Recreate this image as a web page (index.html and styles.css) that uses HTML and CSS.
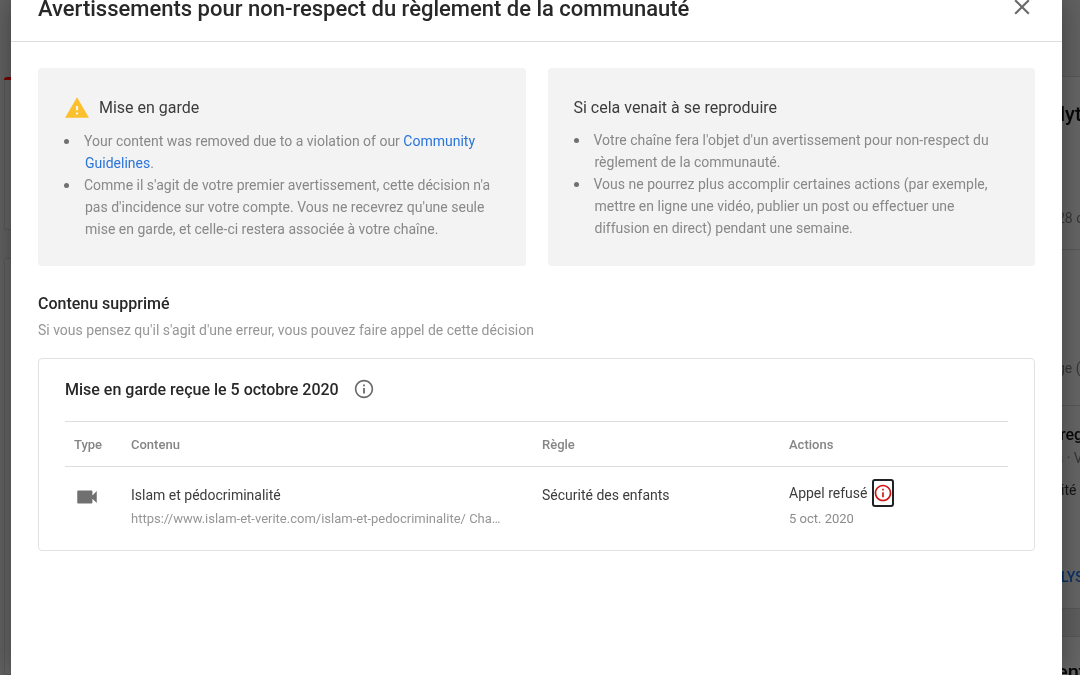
FILE: index.html
```html
<!DOCTYPE html>
<html lang="fr">
<head>
<meta charset="utf-8">
<meta name="viewport" content="width=device-width, initial-scale=1">
<title>Avertissements pour non-respect du règlement de la communauté</title>
<link rel="stylesheet" href="styles.css">
</head>
<body>
<div class="backdrop" aria-hidden="true">
  <div class="side side-left">
    <div class="tab-line"></div>
    <div class="left-card left-card-top"></div>
    <div class="left-card left-card-rest"></div>
  </div>
  <div class="side side-right">
    <div class="topbar"></div>
    <div class="stats">
      <p class="stats-title">lyt</p>
      <p class="stats-period">28 o</p>
    </div>
    <div class="summary"><p>ge (</p></div>
    <div class="top-videos">
      <p class="videos-title">reg</p>
      <p class="videos-sub">s · V</p>
      <p class="videos-item">ité</p>
      <p class="videos-link">LYS</p>
    </div>
    <div class="gap"></div>
    <div class="next-card"><p>ent</p></div>
  </div>
</div>

<main class="dialog" role="dialog" aria-labelledby="dialog-title">
  <header class="dialog-header">
    <h1 id="dialog-title">Avertissements pour non-respect du règlement de la communauté</h1>
    <button class="close" type="button" aria-label="Fermer">
      <svg viewBox="0 0 24 24" width="26" height="26"><path fill="currentColor" d="M19 6.41 17.59 5 12 10.59 6.41 5 5 6.41 10.59 12 5 17.59 6.41 19 12 13.41 17.59 19 19 17.59 13.41 12z"/></svg>
    </button>
  </header>

  <div class="dialog-body">
    <div class="notices">
      <section class="notice">
        <h2 class="with-icon">
          <svg viewBox="0 0 24 24" width="26" height="26" aria-hidden="true"><path fill="#fbc02d" d="M1 22h22L12 3 1 22zm12-3h-2v-2h2v2zm0-4h-2v-4h2v4z"/></svg>
          <span>Mise en garde</span>
        </h2>
        <ul>
          <li>Your content was removed due to a violation of our <a href="#">Community<br>Guidelines</a>.</li>
          <li>Comme il s'agit de votre premier avertissement, cette décision n'a<br>pas d'incidence sur votre compte. Vous ne recevrez qu'une seule<br>mise en garde, et celle-ci restera associée à votre chaîne.</li>
        </ul>
      </section>
      <section class="notice">
        <h2>Si cela venait à se reproduire</h2>
        <ul>
          <li>Votre chaîne fera l'objet d'un avertissement pour non-respect du<br>règlement de la communauté.</li>
          <li>Vous ne pourrez plus accomplir certaines actions (par exemple,<br>mettre en ligne une vidéo, publier un post ou effectuer une<br>diffusion en direct) pendant une semaine.</li>
        </ul>
      </section>
    </div>

    <h2 class="section-title">Contenu supprimé</h2>
    <p class="section-note">Si vous pensez qu'il s'agit d'une erreur, vous pouvez faire appel de cette décision</p>

    <section class="strike">
      <h3>
        <span>Mise en garde reçue le 5 octobre 2020</span>
        <button class="info" type="button" aria-label="Plus d'informations">
          <svg viewBox="0 0 24 24" width="22" height="22"><path fill="currentColor" d="M11 7h2v2h-2zm0 4h2v6h-2zm1-9C6.480 2 2 6.480 2 12s4.480 10 10 10 10-4.480 10-10S17.520 2 12 2zm0 18.200c-4.520 0-8.200-3.680-8.200-8.200S7.480 3.800 12 3.800s8.200 3.680 8.200 8.200-3.680 8.200-8.200 8.200z"/></svg>
        </button>
      </h3>
      <table>
        <thead>
          <tr><th class="col-type" scope="col">Type</th><th class="col-content" scope="col">Contenu</th><th class="col-rule" scope="col">Règle</th><th scope="col">Actions</th></tr>
        </thead>
        <tbody>
          <tr>
            <td class="type-cell"><svg viewBox="0 0 24 24" width="26" height="26" role="img" aria-label="Vidéo"><path fill="#707070" d="M17 10.500V7c0-.550-.450-1-1-1H4c-.550 0-1 .450-1 1v10c0 .550.450 1 1 1h12c.550 0 1-.450 1-1v-3.500l4 4v-11l-4 4z"/></svg></td>
            <td>
              <p class="main-text">Islam et pédocriminalité</p>
              <p class="sub-text">https://www.islam-et-verite.com/islam-et-pedocriminalite/ Cha…</p>
            </td>
            <td><p class="main-text">Sécurité des enfants</p></td>
            <td>
              <div class="action">
                <span>Appel refusé</span>
                <button class="info-alert" type="button" aria-label="Détails du refus">
                  <svg viewBox="0 0 24 24" width="20" height="20"><path fill="currentColor" d="M11 7h2v2h-2zm0 4h2v6h-2zm1-9C6.480 2 2 6.480 2 12s4.480 10 10 10 10-4.480 10-10S17.520 2 12 2zm0 18c-4.410 0-8-3.590-8-8s3.590-8 8-8 8 3.590 8 8-3.590 8-8 8z"/></svg>
                </button>
              </div>
              <p class="date">5 oct. 2020</p>
            </td>
          </tr>
        </tbody>
      </table>
    </section>
  </div>
</main>
</body>
</html>
```
FILE: styles.css
```css
* { box-sizing: border-box; }

body {
  margin: 0;
  font-family: Roboto, sans-serif;
  font-size: 14px;
  color: #3c3c3c;
  background: #616161;
  overflow: hidden;
}

h1, h2, h3, p, ul { margin: 0; padding: 0; }

button {
  display: flex;
  padding: 0;
  border: 0;
  background: none;
  color: #6b6b6b;
  cursor: pointer;
}

svg { display: block; flex: none; }

/* Page behind the dialog */
.backdrop {
  position: fixed;
  inset: 0;
  display: flex;
  justify-content: space-between;
  overflow: hidden;
}

.side { display: flex; flex-direction: column; }
.side-left { width: 24px; padding: 77px 0 0 4px; }
.tab-line { height: 3px; border-radius: 3px 0 0 0; background: #7a0000; }
.left-card { border: 1px solid #585858; border-radius: 3px; background: #646464; }
.left-card-top { height: 150px; border-top: 0; }
.left-card-rest { flex: 1; margin-top: 28px; }

.side-right { width: 24px; white-space: nowrap; background: #656565; }
.side-right > div { flex: none; border-bottom: 1px solid #575757; }
.topbar { height: 77px; background: #616161; }
.stats { height: 173px; padding-top: 25px; }
.stats-title { padding-left: 4px; font-size: 20px; line-height: 24px; font-weight: 500; color: #080808; }
.stats-period { padding: 82px 0 0 1px; line-height: 20px; color: #363636; }
.summary { height: 156px; padding: 108px 0 0 1px; line-height: 20px; color: #363636; }
.top-videos { height: 203px; padding-top: 19px; }
.videos-title { padding-left: 4px; font-size: 16px; line-height: 20px; font-weight: 500; color: #080808; }
.videos-sub { padding-top: 3px; line-height: 20px; color: #363636; }
.videos-item { padding: 12px 0 0 5px; line-height: 20px; color: #141414; }
.videos-link { padding: 67px 0 0 5px; line-height: 20px; font-weight: 500; color: #082f68; }
.side-right .gap { height: 28px; background: #5e5e5e; }
.next-card { height: 60px; padding: 23px 0 0 1px; font-size: 20px; line-height: 24px; font-weight: 500; color: #080808; }

/* Dialog */
.dialog {
  position: relative;
  min-height: 100vh;
  margin: 0 18px 0 11px;
  background: #fff;
  box-shadow: 0 0 24px rgba(0, 0, 0, .35);
}

.dialog-header {
  display: flex;
  align-items: flex-start;
  justify-content: space-between;
  height: 42px;
  padding: 0 27px;
  border-bottom: 1px solid #dedede;
}

.dialog-header h1 {
  margin-top: -5px;
  font-size: 22px;
  line-height: 28px;
  font-weight: 500;
  color: #282828;
}

.close { margin-top: -6px; }

.dialog-body { padding: 26px 27px 0; }

.notices { display: grid; grid-template-columns: 1fr 1fr; gap: 22px; }
.notice {
  min-height: 198px;
  padding: 26px 26px;
  border-radius: 4px;
  background: #f3f3f3;
}
.notice h2 {
  display: flex;
  align-items: center;
  gap: 9px;
  height: 26px;
  font-size: 16px;
  font-weight: 400;
}
.notice ul { padding: 9px 0 0 21px; line-height: 22px; color: #888; list-style: none; }
.notice .with-icon + ul { padding-top: 10px; }
.notice li { position: relative; text-indent: -1px; }
.notice li::before {
  content: "";
  position: absolute;
  left: -21px;
  top: 9px;
  width: 5px;
  height: 5px;
  border-radius: 50%;
  background: #707070;
}
a { color: #2a74da; text-decoration: none; }

.section-title { margin-top: 26px; font-size: 16px; line-height: 24px; font-weight: 500; color: #282828; }
.section-note { margin-top: 4px; line-height: 20px; color: #969696; }

.strike {
  margin-top: 18px;
  padding: 19px 26px 20px;
  border: 1px solid #e2e2e2;
  border-radius: 4px;
}
.strike h3 {
  display: flex;
  align-items: center;
  gap: 14px;
  height: 22px;
  font-size: 16px;
  font-weight: 500;
  color: #282828;
}
.strike table {
  width: 100%;
  margin-top: 21px;
  border-collapse: collapse;
  table-layout: fixed;
}
th, td { padding: 0; text-align: left; vertical-align: top; }
thead tr { height: 45px; border-top: 1px solid #dedede; border-bottom: 1px solid #dedede; }
th { vertical-align: middle; font-size: 13px; font-weight: 500; color: #858585; }
.strike .col-type { width: 66px; padding-left: 9px; }
.col-content { width: 411px; }
.col-rule { width: 247px; }
td { padding-top: 17px; }
.type-cell { padding-left: 9px; }
.main-text { line-height: 22px; }
.sub-text { margin-top: 3px; font-size: 13px; line-height: 20px; color: #969696; white-space: nowrap; }
td:last-child { padding-top: 12px; padding-bottom: 1px; }
.action { display: flex; align-items: center; gap: 5px; height: 27px; }
.info-alert {
  justify-content: center;
  width: 22px;
  padding: 2px 0;
  border: 2px solid #202124;
  border-radius: 3px;
  color: #d11212;
}
.date { margin-top: 3px; font-size: 13px; line-height: 20px; color: #8c8c8c; }
```
